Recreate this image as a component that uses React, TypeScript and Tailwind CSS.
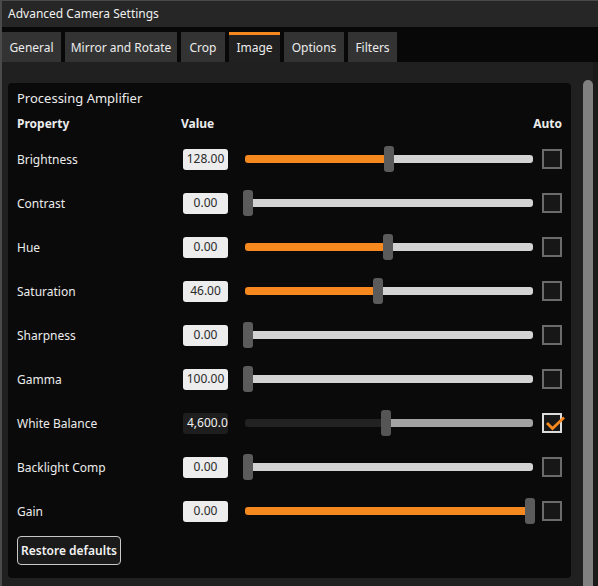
import React from 'react';

type Row = {
    label: string;
    value: string;
    pos: number; // 0..1 thumb position
    filled: boolean;
    disabled?: boolean;
    auto?: boolean;
};

const rows: Row[] = [
    { label: 'Brightness', value: '128.00', pos: 0.5, filled: true },
    { label: 'Contrast', value: '0.00', pos: 0, filled: false },
    { label: 'Hue', value: '0.00', pos: 0.496, filled: true },
    { label: 'Saturation', value: '46.00', pos: 0.46, filled: true },
    { label: 'Sharpness', value: '0.00', pos: 0, filled: false },
    { label: 'Gamma', value: '100.00', pos: 0, filled: false },
    { label: 'White Balance', value: '4,600.00', pos: 0.49, filled: false, disabled: true, auto: true },
    { label: 'Backlight Comp', value: '0.00', pos: 0, filled: false },
    { label: 'Gain', value: '0.00', pos: 1, filled: true },
];

const tabs = [
    { name: 'General', w: 'w-[59px]' },
    { name: 'Mirror and Rotate', w: 'w-[112px]' },
    { name: 'Crop', w: 'w-[44px]' },
    { name: 'Image', w: 'w-[51px]' },
    { name: 'Options', w: 'w-[60px]' },
    { name: 'Filters', w: 'w-[49px]' },
];

const Slider: React.FC<{ row: Row }> = ({ row }) => {
    // track is 288px wide; the thumb runs slightly past both ends
    const left = Math.round(row.pos * 282) - 2;
    const fillColor = row.disabled ? 'bg-[#222222]' : row.filled ? 'bg-[#f5881f]' : 'bg-[#d3d3d3]';
    const restColor = row.disabled ? 'bg-[#a3a3a3]' : 'bg-[#d3d3d3]';
    return (
        <div className="relative h-[26px] w-[288px]">
            <div className="absolute left-0 right-0 top-[9px] flex h-[8px] overflow-hidden rounded-[3px]">
                <div className={fillColor} style={{ width: Math.max(0, left + 5) }} />
                <div className={`flex-1 ${restColor}`} />
            </div>
            <div
                className={`absolute top-0 h-[26px] w-[10px] rounded-[3px] ${row.disabled ? 'bg-[#555555]' : 'bg-[#5b5b5b]'}`}
                style={{ left: left }}
            />
        </div>
    );
};

const Checkbox: React.FC<{ checked?: boolean }> = ({ checked }) => (
    <div
        className={`relative h-[20px] w-[20px] border-2 bg-[#171717] ${checked ? 'border-[#dcdcdc]' : 'border-[#6b6b6b]'}`}
    >
        {checked && (
            <svg className="absolute left-[1px] top-[1px]" width="20" height="16" viewBox="0 0 20 16">
                <path d="M2 7 L7.5 12.5 L19 1.5" fill="none" stroke="#f5881f" strokeWidth="2.8" />
            </svg>
        )}
    </div>
);

const App: React.FC = () => {
    return (
        <div
            className="flex h-[586px] w-[598px] flex-col overflow-hidden border-l-2 border-t border-[#4a4a4a] bg-[#202020] text-[12px] text-[#ececec]"
            style={{ fontFamily: '"Noto Sans", "Open Sans", sans-serif' }}
        >
            {/* title bar */}
            <div className="flex h-[26px] shrink-0 items-center bg-[#262626] pl-[6px] text-[12px] text-[#f0f0f0]">
                Advanced Camera Settings
            </div>

            {/* tab strip */}
            <div className="flex h-[35px] shrink-0 items-end gap-[4px] bg-[#080808]">
                {tabs.map(t => {
                    const active = t.name === 'Image';
                    return (
                        <div
                            key={t.name}
                            className={`flex h-[30px] items-center justify-center ${t.w} ${
                                active ? 'border-t-[3px] border-[#f5881f] bg-[#212121] pb-[1px]' : 'bg-[#333333] pt-[1px]'
                            }`}
                        >
                            {t.name}
                        </div>
                    );
                })}
            </div>

            {/* content */}
            <div className="flex flex-1 pl-[6px]">
                <div className="mt-[21px] flex h-[495px] w-[563px] flex-col rounded-[4px] bg-[#0a0a0a] px-[9px] pt-[6px]">
                    <div className="h-[18px] text-[13px] leading-[18px]">Processing Amplifier</div>
                    <div className="mt-[7px] flex h-[20px] items-center font-bold">
                        <div className="w-[164px]">Property</div>
                        <div className="w-[62px]">Value</div>
                        <div className="w-[308px]" />
                        <div className="flex w-[11px] justify-end overflow-visible whitespace-nowrap">
                            <span>Auto</span>
                        </div>
                    </div>
                    <div className="mt-[3px] flex flex-col">
                        {rows.map(r => (
                            <div key={r.label} className="flex h-[44px] items-center">
                                <div className="w-[166px] pt-[1px]">{r.label}</div>
                                <div
                                    className={`flex h-[21px] w-[45px] items-center overflow-hidden whitespace-nowrap rounded-[3px] ${
                                        r.disabled
                                            ? 'justify-start bg-[#1e1e1e] pl-[4px] text-[#f2f2f2]'
                                            : 'justify-center bg-[#ededed] text-[#2a2a2a]'
                                    }`}
                                >
                                    {r.value}
                                </div>
                                <div className="ml-[17px]">
                                    <Slider row={r} />
                                </div>
                                <div className="ml-[9px]">
                                    <Checkbox checked={r.auto} />
                                </div>
                            </div>
                        ))}
                    </div>
                    <button className="mt-[3px] h-[29px] w-[104px] rounded-[4px] border border-[#c8c8c8] bg-[#1a1a1a] text-[12px] font-semibold text-[#f2f2f2]">
                        Restore defaults
                    </button>
                </div>
                <div className="ml-[12px] mt-[18px] w-[10px] rounded-t-[5px] bg-[#808080]" />
                <div className="w-[5px] bg-[#1a1a1a]" />
            </div>
        </div>
    );
};

export default App;
